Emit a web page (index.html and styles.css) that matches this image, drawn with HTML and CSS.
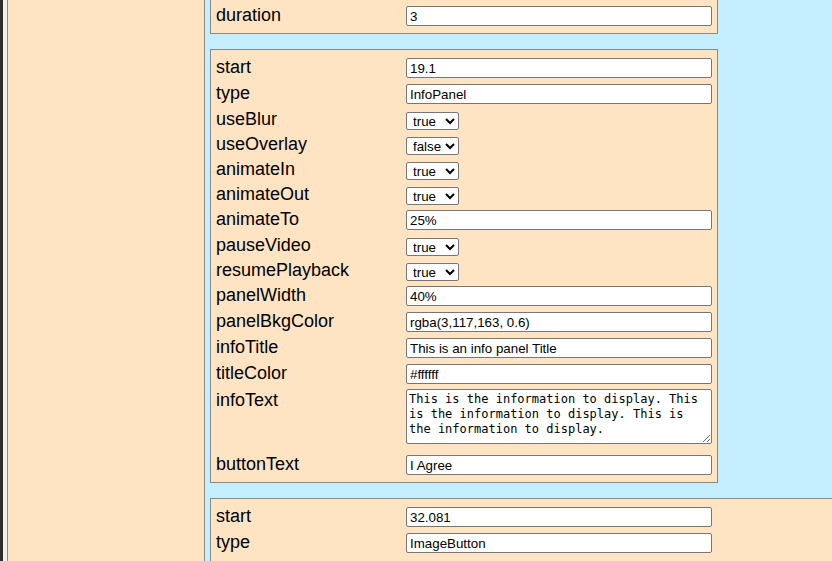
FILE: index.html
```html
<!DOCTYPE html>
<html lang="en">
<head>
<meta charset="utf-8">
<title>Events editor</title>
<link rel="stylesheet" href="styles.css">
</head>
<body>
<div class="page">
  <div class="edge-dark"></div>
  <div class="edge-light"></div>
  <aside class="sidebar"></aside>
  <main class="main">
    <div class="list">
      <section class="panel">
        <div class="row"><span class="label">start</span><input class="text" type="text" value="12.5"></div>
        <div class="row"><span class="label">type</span><input class="text" type="text" value="Pause"></div>
        <div class="row"><span class="label">message</span><input class="text" type="text" value="Paused"></div>
        <div class="row"><span class="label">duration</span><input class="text" type="text" value="3"></div>
      </section>

      <section class="panel">
        <div class="row"><span class="label">start</span><input class="text" type="text" value="19.1"></div>
        <div class="row"><span class="label">type</span><input class="text" type="text" value="InfoPanel"></div>
        <div class="row sel"><span class="label">useBlur</span><select><option selected>true</option><option>false</option></select></div>
        <div class="row sel"><span class="label">useOverlay</span><select><option>true</option><option selected>false</option></select></div>
        <div class="row sel"><span class="label">animateIn</span><select><option selected>true</option><option>false</option></select></div>
        <div class="row sel"><span class="label">animateOut</span><select><option selected>true</option><option>false</option></select></div>
        <div class="row"><span class="label">animateTo</span><input class="text" type="text" value="25%"></div>
        <div class="row sel"><span class="label">pauseVideo</span><select><option selected>true</option><option>false</option></select></div>
        <div class="row sel"><span class="label">resumePlayback</span><select><option selected>true</option><option>false</option></select></div>
        <div class="row"><span class="label">panelWidth</span><input class="text" type="text" value="40%"></div>
        <div class="row"><span class="label">panelBkgColor</span><input class="text" type="text" value="rgba(3,117,163, 0.6)"></div>
        <div class="row"><span class="label">infoTitle</span><input class="text" type="text" value="This is an info panel Title"></div>
        <div class="row"><span class="label">titleColor</span><input class="text" type="text" value="#ffffff"></div>
        <div class="row area"><span class="label">infoText</span><textarea>This is the information to display. This is the information to display. This is the information to display.</textarea></div>
        <div class="row"><span class="label">buttonText</span><input class="text" type="text" value="I Agree"></div>
      </section>

      <section class="panel wide">
        <div class="row"><span class="label">start</span><input class="text" type="text" value="32.081"></div>
        <div class="row"><span class="label">type</span><input class="text" type="text" value="ImageButton"></div>
        <div class="row sel"><span class="label">pauseVideo</span><select><option selected>true</option><option>false</option></select></div>
        <div class="row"><span class="label">imageUrl</span><input class="text" type="text" value="button.png"></div>
      </section>
    </div>
  </main>
</div>
</body>
</html>
```

FILE: styles.css
```css
* {
  box-sizing: border-box;
}

html,
body {
  margin: 0;
  height: 100%;
  overflow: hidden;
}

body {
  font-family: "Liberation Sans", Arial, sans-serif;
  color: #000;
}

.page {
  display: flex;
  height: 561px;
}

.edge-dark {
  flex: none;
  width: 3px;
  background: #2d2d2d;
}

.edge-light {
  flex: none;
  width: 4px;
  background: #efefef;
}

.sidebar {
  flex: none;
  width: 198px;
  background: #ffe4c4;
  border-left: 1px solid #8a8a8a;
  border-right: 1px solid #8a8a8a;
}

.main {
  flex: 1;
  min-width: 0;
  background: #c5effe;
  padding-left: 5px;
  overflow: hidden;
}

/* the list is shown scrolled down by 81px */
.list {
  margin-top: -81px;
}

.panel {
  width: 508px;
  background: #ffe4c4;
  border: 1px solid #8a8a8a;
  padding: 5px 5px 4px;
  margin-bottom: 15px;
}

.panel.wide {
  width: 760px;
}

.row {
  display: flex;
  align-items: center;
  height: 26px;
}

.row.sel {
  height: 25px;
}

.row.area {
  height: 65px;
  align-items: flex-start;
}

.label {
  flex: none;
  width: 190px;
  margin-bottom: 2px;
  font-size: 18px;
  line-height: 21px;
  white-space: nowrap;
}

.row.sel .label {
  margin-bottom: 0;
}

.row.area .label {
  margin-top: 3px;
  margin-bottom: 0;
}

.text {
  flex: none;
  width: 306px;
  height: 20px;
  margin: 0;
  padding: 0 3px;
  border: 1px solid #767676;
  border-radius: 2px;
  background: #fff;
  color: #000;
  font-family: "Liberation Sans", Arial, sans-serif;
  font-size: 13.33px;
}

select {
  flex: none;
  width: 53px;
  height: 18px;
  margin: 3px 0 0;
  padding: 0 0 0 2px;
  border: 1px solid #767676;
  border-radius: 2px;
  background: #fff;
  color: #000;
  font-family: "Liberation Sans", Arial, sans-serif;
  font-size: 13.33px;
}

textarea {
  flex: none;
  width: 306px;
  height: 55px;
  margin: 2px 0 0;
  padding: 2px;
  border: 1px solid #767676;
  border-radius: 2px;
  background: #fff;
  color: #000;
  font-family: "DejaVu Sans Mono", "Liberation Mono", monospace;
  font-size: 12px;
  line-height: 15px;
  resize: both;
}
```
